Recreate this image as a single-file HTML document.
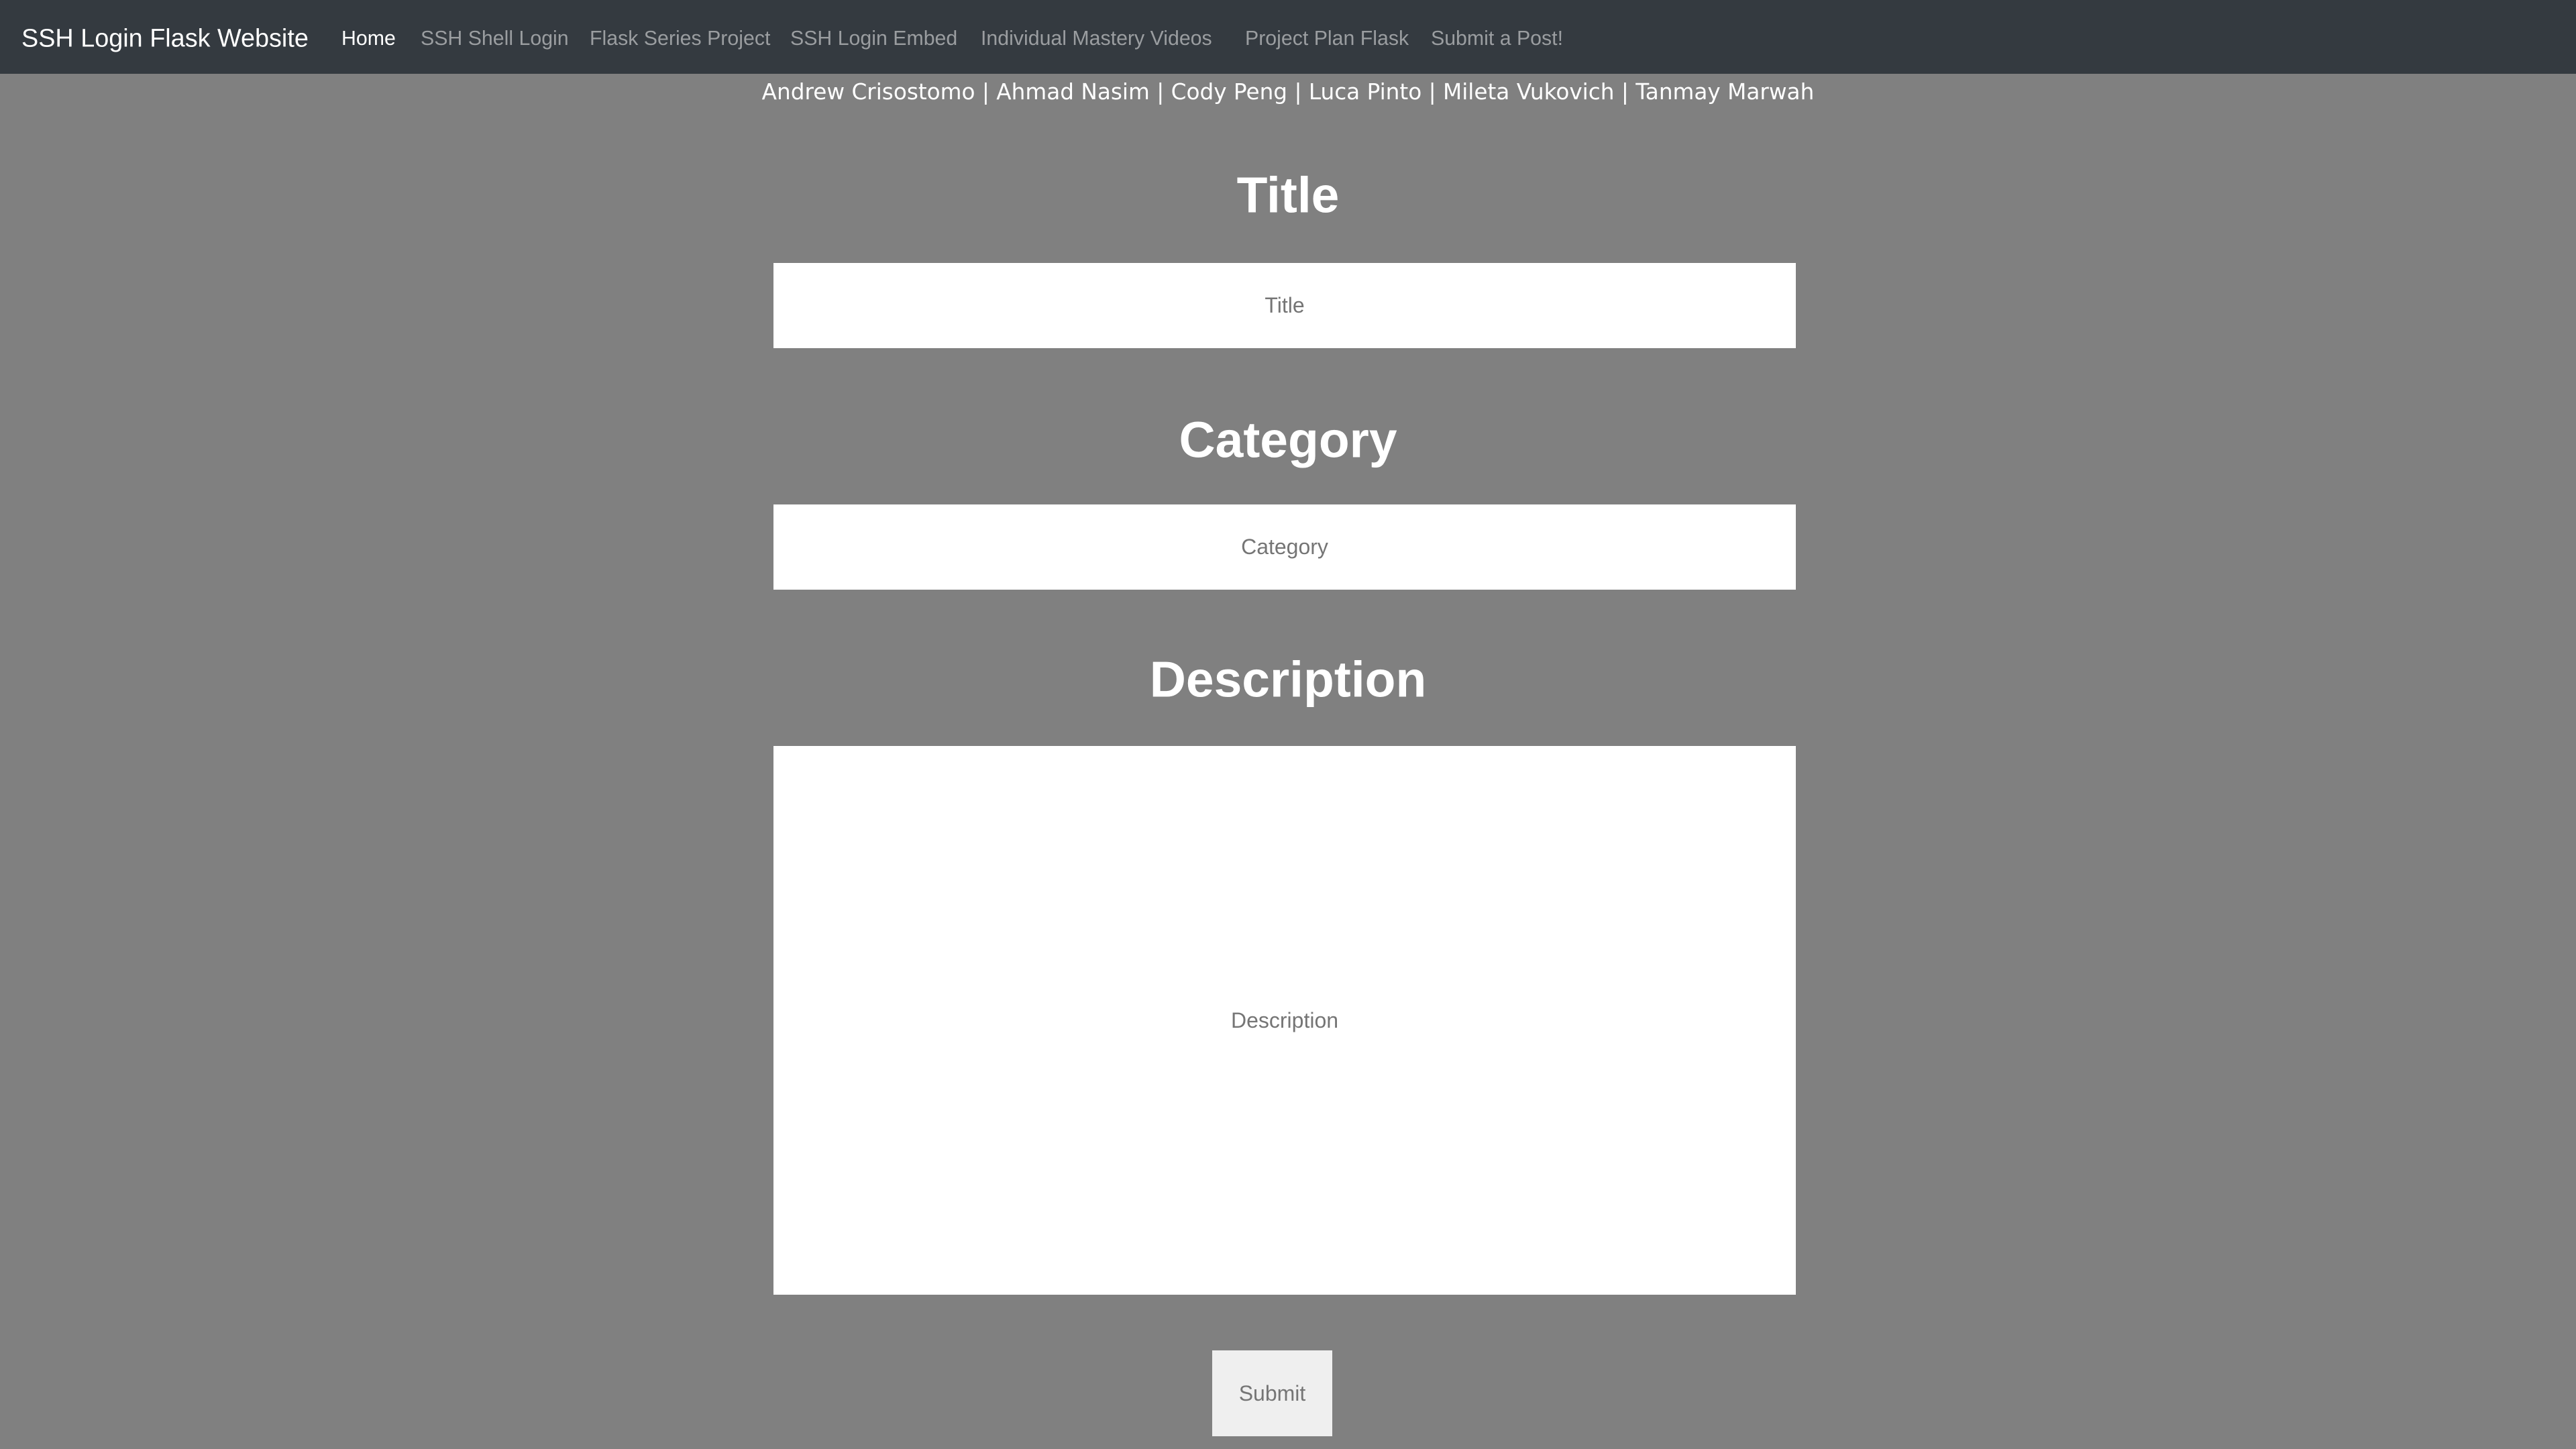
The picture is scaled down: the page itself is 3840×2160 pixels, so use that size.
<!DOCTYPE html>
<html><head><meta charset="utf-8"><style>
html,body{margin:0;padding:0;}
body{width:3840px;height:2160px;background:#808080;position:relative;overflow:hidden;font-family:"Liberation Sans","DejaVu Sans",sans-serif;}
.nav{position:absolute;left:0;top:0;width:3840px;height:110px;background:#343a40;}
.nav span{position:absolute;top:58px;transform:translateY(-50%);white-space:nowrap;color:#9a9da0;font-size:30.3px;}
.nav .brand{color:#fff;font-size:37.8px;left:32px;}
.names{position:absolute;top:121px;left:0;width:3840px;text-align:center;color:#fff;font-family:"DejaVu Sans",sans-serif;font-size:32.7px;line-height:1;}
h1{position:absolute;left:0;width:3840px;margin:0;text-align:center;color:#fff;font-size:75px;font-weight:bold;line-height:1;transform:translateY(-50%);}
.box{position:absolute;left:1153px;width:1524px;background:#fff;display:flex;align-items:center;justify-content:center;color:#757575;font-size:32px;}
.btn{position:absolute;left:1807px;top:2013px;width:179px;height:128px;background:#efefef;display:flex;align-items:center;justify-content:center;color:#757575;font-size:32px;}
</style></head><body>
<div class="nav">
<span class="brand">SSH Login Flask Website</span>
<span style="left:509px;color:#fff">Home</span>
<span style="left:627px">SSH Shell Login</span>
<span style="left:879px">Flask Series Project</span>
<span style="left:1178px">SSH Login Embed</span>
<span style="left:1462px">Individual Mastery Videos</span>
<span style="left:1856px">Project Plan Flask</span>
<span style="left:2133px">Submit a Post!</span>
</div>
<div class="names">Andrew Crisostomo | Ahmad Nasim | Cody Peng | Luca Pinto | Mileta Vukovich | Tanmay Marwah</div>
<h1 style="top:291px">Title</h1>
<div class="box" style="top:392px;height:127px">Title</div>
<h1 style="top:656px">Category</h1>
<div class="box" style="top:752px;height:127px">Category</div>
<h1 style="top:1013px">Description</h1>
<div class="box" style="top:1112px;height:818px">Description</div>
<div class="btn">Submit</div>
</body></html>
